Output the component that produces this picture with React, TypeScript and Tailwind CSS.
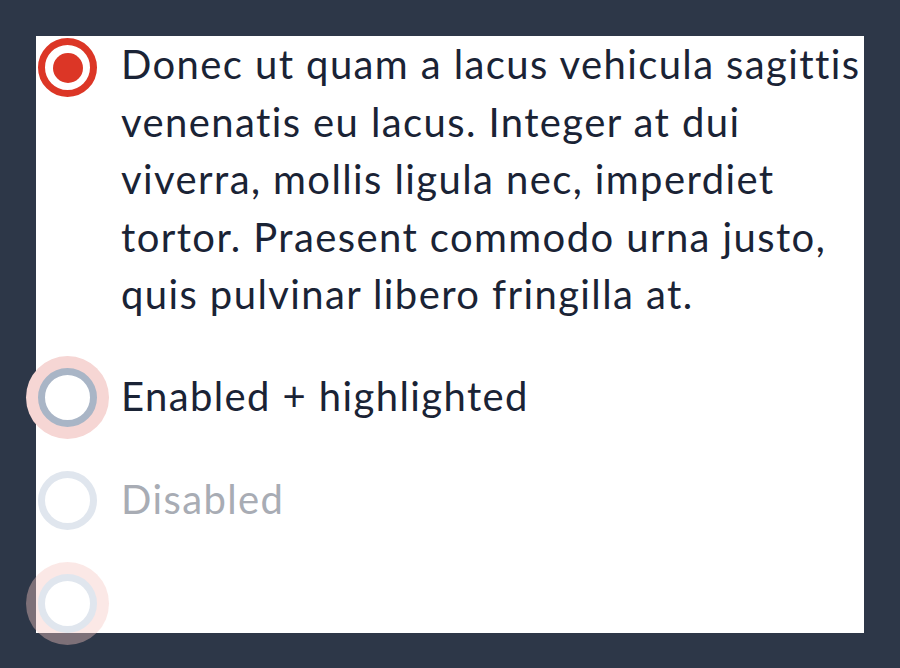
import React from 'react';

type RadioProps = {
  variant: 'checked' | 'highlighted' | 'disabled' | 'disabledHighlighted';
};

function Radio({ variant }: RadioProps) {
  if (variant === 'checked') {
    return (
      <span className="mt-[2px] ml-[2px] flex h-[59px] w-[59px] shrink-0 items-center justify-center rounded-full border-[7px] border-[#dc3626] bg-white">
        <span className="h-[30px] w-[30px] rounded-full bg-[#dc3626]" />
      </span>
    );
  }
  if (variant === 'highlighted') {
    return (
      <span className="ml-[2px] h-[59px] w-[59px] shrink-0 rounded-full border-[7px] border-[#a9b5c6] bg-white shadow-[0_0_0_12px_#f6d6d4]" />
    );
  }
  if (variant === 'disabled') {
    return (
      <span className="ml-[2px] h-[59px] w-[59px] shrink-0 rounded-full border-[7px] border-[#e0e6ee] bg-white" />
    );
  }
  return (
    <span className="ml-[2px] h-[59px] w-[59px] shrink-0 rounded-full border-[7px] border-[#e0e6ee] bg-white shadow-[0_0_0_12px_rgba(245,197,192,0.4)]" />
  );
}

export default function App() {
  return (
    <div className="min-h-screen bg-[#2d3748] p-[36px] font-['Lato',_'Noto_Sans',_sans-serif] tracking-[1.4px] [font-variant-ligatures:none]">
      <div className="flex flex-col gap-[44px] bg-white">
        {/* Checked, long label */}
        <label className="flex items-start gap-[24px]">
          <Radio variant="checked" />
          <span className="text-[40px] leading-[57.5px] text-[#1a2335]">
            Donec ut quam a lacus vehicula sagittis venenatis eu lacus. Integer at dui viverra, mollis ligula nec,
            imperdiet tortor. Praesent commodo urna justo, quis pulvinar libero fringilla at.
          </span>
        </label>

        {/* Enabled + highlighted */}
        <label className="flex items-center gap-[24px]">
          <Radio variant="highlighted" />
          <span className="text-[40px] leading-[57.5px] text-[#1a2335]">Enabled + highlighted</span>
        </label>

        {/* Disabled */}
        <label className="flex items-center gap-[24px]">
          <Radio variant="disabled" />
          <span className="text-[40px] leading-[57.5px] text-[#a8acb4]">Disabled</span>
        </label>

        {/* Disabled + highlighted, no label */}
        <label className="flex items-center">
          <Radio variant="disabledHighlighted" />
        </label>
      </div>
    </div>
  );
}
